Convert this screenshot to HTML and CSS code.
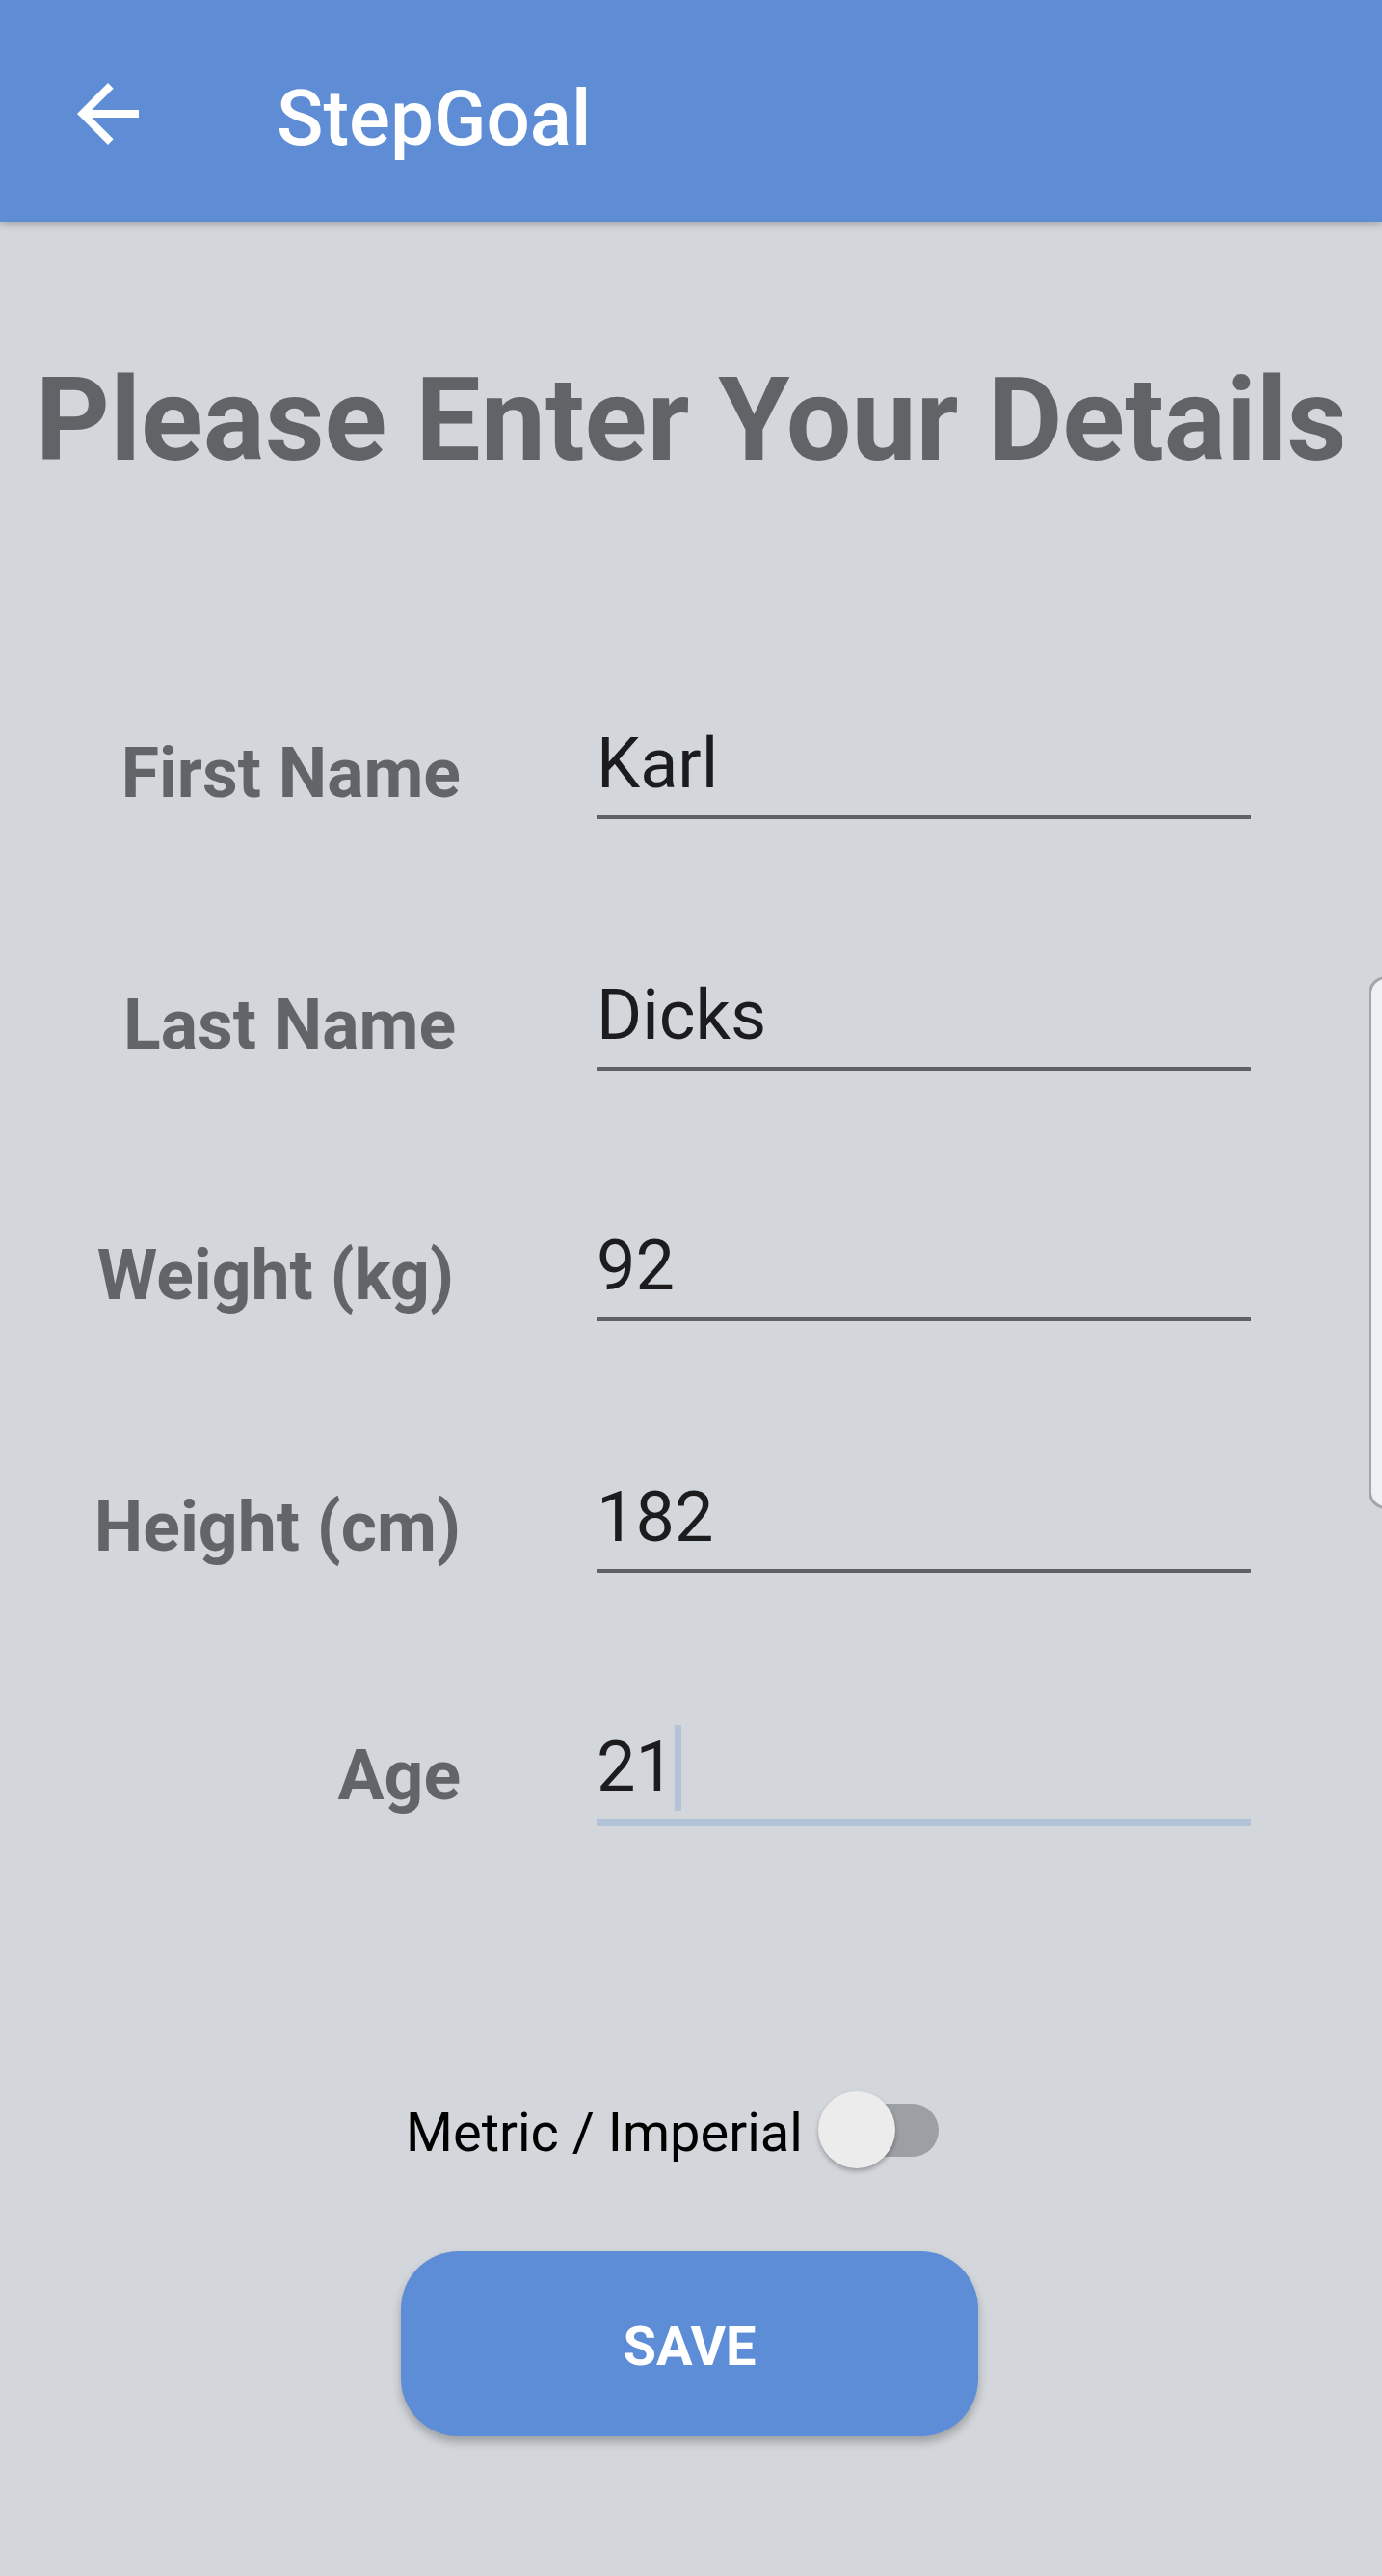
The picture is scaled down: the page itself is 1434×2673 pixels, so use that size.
FILE: index.html
```html
<!DOCTYPE html>
<html lang="en">
<head>
<meta charset="utf-8">
<title>StepGoal</title>
<link rel="stylesheet" href="styles.css">
</head>
<body>
<div class="screen">
  <header class="appbar">
    <svg class="back" viewBox="0 0 24 24" width="96" height="96" aria-hidden="true">
      <path d="M20 11H7.83l5.59-5.59L12 4l-8 8 8 8 1.41-1.41L7.83 13H20v-2z" fill="#ffffff"/>
    </svg>
    <h1 class="appbar-title">StepGoal</h1>
  </header>

  <h2 class="heading">Please Enter Your Details</h2>

  <div class="form">
    <div class="row">
      <div class="label">First Name</div>
      <div class="field">Karl</div>
    </div>
    <div class="row">
      <div class="label label-inset">Last Name</div>
      <div class="field">Dicks</div>
    </div>
    <div class="row">
      <div class="label label-inset-wide">Weight (kg)</div>
      <div class="field">92</div>
    </div>
    <div class="row">
      <div class="label">Height (cm)</div>
      <div class="field">182</div>
    </div>
    <div class="row row-focused">
      <div class="label">Age</div>
      <div class="field field-focused"><span class="caret-text">21</span></div>
    </div>
  </div>

  <div class="toggle-row">
    <span class="toggle-label">Metric / Imperial</span>
    <div class="switch">
      <span class="track"></span>
      <span class="thumb"></span>
    </div>
  </div>

  <div class="actions">
    <button class="save">SAVE</button>
  </div>

  <div class="edge-handle"></div>
</div>
</body>
</html>
```
FILE: styles.css
```css
html, body {
  margin: 0;
  padding: 0;
}
body {
  background: #d3d6db;
  font-family: Roboto, "Noto Sans", "Liberation Sans", sans-serif;
}
.screen {
  position: relative;
  width: 1434px;
  height: 2673px;
  overflow: hidden;
  background: #d3d6db;
}

/* App bar */
.appbar {
  height: 230px;
  background: #5e8dd6;
  display: flex;
  align-items: flex-start;
  box-shadow: 0 3px 8px rgba(0, 0, 0, 0.22);
  position: relative;
  z-index: 1;
}
.back {
  margin-left: 64px;
  margin-top: 70px;
  flex: none;
}
.appbar-title {
  margin: 83px 0 0 127px;
  font-size: 80px;
  line-height: 80px;
  font-weight: 500;
  color: #ffffff;
}

/* Heading */
.heading {
  margin: 146px 0 0 0;
  text-align: center;
  font-size: 120px;
  line-height: 120px;
  font-weight: 700;
  color: #626367;
}

/* Form */
.form {
  margin-top: 93.5px;
  display: flex;
  flex-direction: column;
}
.row {
  height: 260.5px;
  display: flex;
  align-items: flex-end;
}
.row-focused {
  height: 263.5px;
}
.label {
  width: 478px;
  box-sizing: border-box;
  text-align: right;
  font-size: 71.5px;
  line-height: 72px;
  font-weight: 700;
  color: #636468;
  padding-bottom: 11px;
}
.label-inset {
  padding-right: 5px;
}
.label-inset-wide {
  padding-right: 7px;
}
.row-focused .label {
  padding-bottom: 16px;
}
.field {
  margin-left: 141px;
  width: 679px;
  font-size: 72px;
  line-height: 72px;
  color: #1c1c1e;
  padding-bottom: 16.6px;
  border-bottom: 4px solid #606166;
}
.field-focused {
  border-bottom: 8px solid #b3c3d7;
}
.caret-text {
  padding: 1.3px 0 2.4px 0;
  border-right: 7px solid #b3c3d7;
}

/* Toggle */
.toggle-row {
  margin-top: 275px;
  display: flex;
  justify-content: center;
  align-items: center;
}
.toggle-label {
  font-size: 56px;
  line-height: 56px;
  color: #000000;
  margin-top: 6px;
}
.switch {
  display: grid;
  margin-left: 16px;
  margin-right: 39px;
  width: 125px;
  height: 80px;
}
.track {
  grid-area: 1 / 1;
  align-self: center;
  justify-self: end;
  width: 113px;
  height: 55px;
  border-radius: 28px;
  background: #9c9fa3;
}
.thumb {
  grid-area: 1 / 1;
  align-self: center;
  justify-self: start;
  width: 80px;
  height: 80px;
  border-radius: 50%;
  background: #ececec;
  box-shadow: 0 3px 5px rgba(0, 0, 0, 0.28);
}

/* Button */
.actions {
  margin-top: 86px;
  display: flex;
  justify-content: center;
}
.save {
  width: 599px;
  height: 192px;
  margin-right: 3px;
  border: none;
  border-radius: 60px;
  background: #5d8dd6;
  color: #ffffff;
  font-family: Roboto, "Liberation Sans", sans-serif;
  font-size: 56px;
  line-height: 56px;
  font-weight: 700;
  padding: 6px 0 0 0;
  box-shadow: 0 6px 10px rgba(0, 0, 0, 0.25);
}

/* Edge panel handle (overlay) */
.edge-handle {
  position: absolute;
  left: 1420px;
  top: 1013px;
  width: 40px;
  height: 553px;
  box-sizing: border-box;
  border: 3px solid #a4a5a8;
  border-radius: 18px;
  background: #eef0f2;
}
```
